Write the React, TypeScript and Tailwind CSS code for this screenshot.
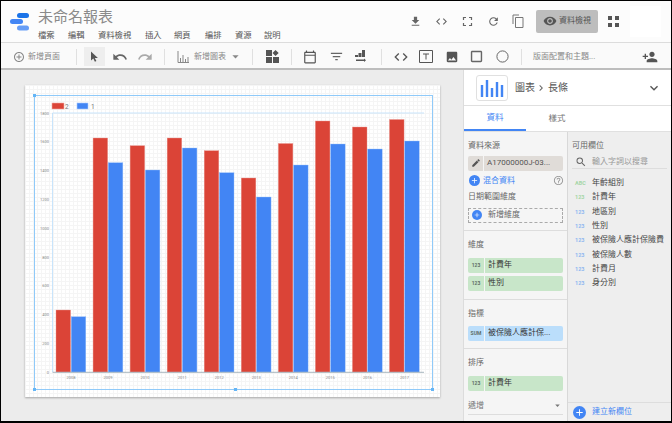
import {
  MdAddCircleOutline,
  MdArrowDropDown,
  MdChevronRight,
  MdCode,
  MdCropSquare,
  MdEdit,
  MdExpandMore,
  MdFileDownload,
  MdFilterList,
  MdHelpOutline,
  MdImage,
  MdOutlineCalendarToday,
  MdPersonAdd,
  MdRedo,
  MdRefresh,
  MdSearch,
  MdUndo,
  MdVisibility,
  MdAdd,
} from 'react-icons/md';

const FONT = '"Roboto", "Noto Sans CJK TC", sans-serif';

const MENU = [
  { label: '檔案', w: 30 },
  { label: '編輯', w: 30 },
  { label: '資料檢視', w: 47 },
  { label: '插入', w: 29 },
  { label: '網頁', w: 31 },
  { label: '編排', w: 30 },
  { label: '資源', w: 29 },
  { label: '說明', w: 30 },
];

const BARS = [
  { year: '2008', red: 310, blue: 316.7 },
  { year: '2009', red: 138, blue: 162.7 },
  { year: '2010', red: 145.7, blue: 170 },
  { year: '2011', red: 138, blue: 148 },
  { year: '2012', red: 150.7, blue: 172.7 },
  { year: '2013', red: 178, blue: 197 },
  { year: '2014', red: 143.5, blue: 165 },
  { year: '2015', red: 121, blue: 144 },
  { year: '2016', red: 127, blue: 149 },
  { year: '2017', red: 119.5, blue: 141 },
];

const TICKS = ['1800', '1600', '1400', '1200', '1000', '800', '600', '400', '200', '0'];

const FIELDS = [
  { type: 'ABC', name: '年齡組別', green: true },
  { type: '123', name: '計費年', green: true },
  { type: '123', name: '地區別' },
  { type: '123', name: '性別' },
  { type: '123', name: '被保險人應計保險費' },
  { type: '123', name: '被保險人數' },
  { type: '123', name: '計費月' },
  { type: '123', name: '身分別' },
];

function Sep() {
  return <div className="h-[16px] w-px bg-[#e0e0e0]" />;
}

function LogoIcon() {
  return (
    <svg width="20" height="20" viewBox="0 0 20 20" className="shrink-0">
      <rect x="7" y="0" width="12" height="5" rx="2.5" fill="#1a73e8" />
      <rect x="0" y="6" width="13" height="5" rx="2.5" fill="#4285f4" />
      <rect x="7" y="12.5" width="12" height="5" rx="2.5" fill="#669df6" />
    </svg>
  );
}

function Chip({ tag, label, color }: { tag: string; label: string; color: string }) {
  return (
    <div className="mx-[4px] flex h-[14.5px] gap-px overflow-hidden rounded-[2px]">
      <div className={`flex w-[16px] items-center justify-center text-[5px] font-bold text-[#5f6f66] ${color}`}>{tag}</div>
      <div className={`flex flex-1 items-center pl-[3px] text-[8px] text-[#333] ${color}`}>{label}</div>
    </div>
  );
}

function Chart() {
  const y0 = 96;
  const x0 = 35;
  return (
    <svg width="398" height="294" className="block" style={{ fontFamily: FONT }}>
      <rect x={52 - x0} y={103 - y0} width="12" height="6" fill="#db4437" stroke="#f0a8a0" strokeWidth="0.6" />
      <text x={65 - x0} y={109 - y0} fontSize="6.5" fill="#777">2</text>
      <rect x={77 - x0} y={103 - y0} width="11" height="6" fill="#4285f4" stroke="#a8c8fa" strokeWidth="0.6" />
      <text x={91 - x0} y={109 - y0} fontSize="6.5" fill="#777">1</text>
      <path d={`M${52.5 - x0} ${113 - y0}H${424 - x0}M${52.5 - x0} ${113 - y0}V${372 - y0}`} stroke="#bbdefb" strokeWidth="0.8" fill="none" />
      {TICKS.map((t, i) => (
        <text key={t} x={49 - x0} y={113 + i * 28.8 + 1.5 - y0} fontSize="4" fill="#888" textAnchor="end">{t}</text>
      ))}
      {BARS.map((b, i) => {
        const x = 56 + i * 37.05 - x0;
        return (
          <g key={b.year}>
            <rect x={x} y={b.red - y0} width="14.6" height={372 - b.red} fill="#db4437" stroke="#eb9a92" strokeWidth="0.4" />
            <rect x={x + 15.2} y={b.blue - y0} width="14.6" height={372 - b.blue} fill="#4285f4" stroke="#9cc2fa" strokeWidth="0.4" />
            <text x={x + 15} y={378.5 - y0} fontSize="4" fill="#888" textAnchor="middle">{b.year}</text>
          </g>
        );
      })}
      <path d={`M${52.5 - x0} ${372.3 - y0}H${424 - x0}`} stroke="#90a4ae" strokeWidth="0.8" />
    </svg>
  );
}

export default function App() {
  return (
    <div
      className="flex h-[423px] w-[672px] flex-col overflow-hidden border-x border-t border-b-2 border-black bg-[#ececec] text-[#555]"
      style={{ fontFamily: FONT }}
    >
      {/* top bar */}
      <header className="flex h-[42px] shrink-0 border-b border-[#dcdcdc] bg-[#fcfcfc]">
        <div className="ml-[9px] mt-[12px]">
          <LogoIcon />
        </div>
        <div className="ml-[8px] flex flex-col">
          <div className="mt-[5px] h-[22px] text-[15px] leading-[22px] text-[#8a8a8a]">未命名報表</div>
          <nav className="mt-[1px] flex text-[8.3px] leading-[12px] text-[#555]">
            {MENU.map((m) => (
              <span key={m.label} style={{ width: m.w }}>{m.label}</span>
            ))}
          </nav>
        </div>
        <div className="ml-auto flex items-center pr-[10px] pb-[1px] text-[#666]">
          <MdFileDownload className="text-[13px]" />
          <MdCode className="ml-[13px] text-[13px]" />
          <svg width="13" height="13" viewBox="0 0 13 13" className="ml-[13px]">
            <path d="M2.5 5V2.5H5M8 2.5h2.5V5M10.5 8v2.5H8M5 10.5H2.5V8" stroke="#666" strokeWidth="1.2" fill="none" />
          </svg>
          <MdRefresh className="ml-[13px] text-[13px]" />
          <svg width="12" height="14" viewBox="0 0 12 14" className="ml-[12px]">
            <path d="M1 10V1h6M3.5 3.5h7.5v10H3.5z" stroke="#777" strokeWidth="1" fill="none" />
          </svg>
          <div className="ml-[12px] flex h-[23px] w-[62px] items-center justify-center gap-[2px] rounded-[2px] bg-[#bdbdbd] text-[8px] text-[#555]">
            <MdVisibility className="text-[14px]" />
            資料檢視
          </div>
          <div className="ml-[10px] grid grid-cols-2 gap-[3px]">
            <span className="h-[4px] w-[4px] bg-[#555]" />
            <span className="h-[4px] w-[4px] bg-[#555]" />
            <span className="h-[4px] w-[4px] bg-[#555]" />
            <span className="h-[4px] w-[4px] bg-[#555]" />
          </div>
          <div className="ml-[11px] h-[31px] w-[31px] bg-white" />
        </div>
      </header>

      {/* toolbar */}
      <div className="flex h-[27px] shrink-0 items-center border-b-2 border-[#bdbdbd] bg-[#fafafa] pt-[2px] text-[#666]">
        <MdAddCircleOutline className="ml-[12px] text-[12px] text-[#888]" />
        <span className="ml-[3px] w-[48px] text-[8px] text-[#888]">新增頁面</span>
        <Sep />
        <div className="ml-[7px] flex h-[19px] w-[21px] items-center justify-center bg-[#eeeeee]">
          <svg width="9" height="11" viewBox="0 0 9 11">
            <path d="M1 0.5v9l2.3-2 1.6 3.3 1.5-.7-1.6-3.2h3.1z" fill="#555" />
          </svg>
        </div>
        <MdUndo className="ml-[7px] text-[16px] text-[#666]" />
        <MdRedo className="ml-[9px] text-[16px] text-[#aaa]" />
        <div className="ml-[11px]"><Sep /></div>
        <svg width="12" height="12" viewBox="0 0 12 12" className="ml-[12px]">
          <path d="M1 0v11.5h11M3.5 11V7M6 11V4M8.5 11V8M11 11V6" stroke="#888" strokeWidth="1" fill="none" />
        </svg>
        <span className="ml-[5px] w-[34px] text-[8px] text-[#888]">新增圖表</span>
        <MdArrowDropDown className="text-[15px] text-[#888]" />
        <div className="ml-[9px]"><Sep /></div>
        <svg width="13" height="13" viewBox="0 0 13 13" className="ml-[13px]">
          <path d="M0 0h6v6H0zM9.5 0l3.2 3-3.2 3-3-3zM0 7h6v6H0zM7 7h6v6H7z" fill="#555" />
        </svg>
        <div className="ml-[12px]"><Sep /></div>
        <MdOutlineCalendarToday className="ml-[11px] text-[14px] text-[#555]" />
        <MdFilterList className="ml-[12px] text-[15px] text-[#666]" />
        <svg width="12" height="13" viewBox="0 0 12 13" className="ml-[11px]">
          <path d="M7 0h3v7H7zM3.5 3h3v4h-3zM0 5h3v2H0zM1 9.5h8V8.5l2 1.7-2 1.7v-1H1z" fill="#555" />
        </svg>
        <div className="ml-[14px]"><Sep /></div>
        <MdCode className="ml-[11px] text-[16px] text-[#555]" />
        <svg width="14" height="13" viewBox="0 0 14 13" className="ml-[10px]">
          <path d="M.5.5h13v12H.5zM4 4h6M7 4v5.5" stroke="#555" strokeWidth="1" fill="none" />
        </svg>
        <MdImage className="ml-[12px] text-[14px] text-[#555]" />
        <MdCropSquare className="ml-[9px] text-[17px] text-[#666]" />
        <svg width="13" height="13" viewBox="0 0 13 13" className="ml-[11px]">
          <circle cx="6.5" cy="6.5" r="5.6" stroke="#666" strokeWidth="1" fill="none" />
        </svg>
        <div className="ml-[12px]"><Sep /></div>
        <span className="ml-[11px] text-[8px] text-[#888]">版面配置和主題...</span>
        <MdPersonAdd className="ml-auto mr-[13px] text-[16px] text-[#555]" />
      </div>

      {/* main */}
      <div className="flex min-h-0 flex-1">
        {/* canvas */}
        <main className="w-[462px] shrink-0 pl-[24px] pt-[15px]">
          <div className="h-[312px] w-[415px] bg-white bg-[linear-gradient(#f5f5f5_1px,transparent_1px),linear-gradient(90deg,#f5f5f5_1px,transparent_1px)] bg-[length:4px_4px] pl-[9px] pt-[10px] shadow-[0_1px_2px_rgba(0,0,0,0.3)]">
            <div className="relative h-[295px] w-[399px] border border-[#90caf9]">
              <Chart />
              {/* selection handles */}
              <span className="absolute -left-[2px] -top-[2px] h-[3px] w-[3px] bg-[#64b5f6]" />
              <span className="absolute -bottom-[2px] -left-[2px] h-[3px] w-[3px] bg-[#64b5f6]" />
              <span className="absolute -bottom-[2px] left-[199px] h-[3px] w-[3px] bg-[#64b5f6]" />
              <span className="absolute -bottom-[2px] -right-[2px] h-[3px] w-[3px] bg-[#64b5f6]" />
            </div>
          </div>
        </main>

        {/* side panel */}
        <aside className="flex w-[208px] shrink-0 flex-col border-l border-[#dcdcdc] bg-white">
          <div className="flex h-[36px] shrink-0 items-center border-b border-[#e0e0e0] pl-[12px] pr-[9px]">
            <div className="flex h-[26px] w-[32px] items-center justify-center rounded-[3px] border border-[#e0e0e0]">
              <svg width="26" height="18" viewBox="0 0 26 18">
                <path d="M3 6v12M8 1v17M13 9v9M18 3v15M23 6v12" stroke="#4285f4" strokeWidth="2.4" />
              </svg>
            </div>
            <span className="ml-[7px] text-[10px] text-[#555]">圖表</span>
            <MdChevronRight className="text-[12px] text-[#666]" />
            <span className="ml-[1px] text-[10px] text-[#555]">長條</span>
            <MdExpandMore className="ml-auto text-[16px] text-[#555]" />
          </div>
          <div className="flex h-[25px] shrink-0 text-[8.5px]">
            <div className="flex w-[62px] items-center justify-center border-b-2 border-[#4285f4] text-[#4285f4]">資料</div>
            <div className="flex w-[62px] items-center justify-center text-[#777]">樣式</div>
          </div>
          <div className="flex min-h-0 flex-1 border-t border-[#e0e0e0]">
            {/* data column */}
            <div className="w-[104px] shrink-0 border-r border-[#d8d8d8] bg-[#f5f5f5] text-[8px]">
              <div className="ml-[4px] mt-[8px] leading-[12px] text-[#666]">資料來源</div>
              <div className="mx-[4px] mt-[4px] flex h-[14.5px] gap-px">
                <div className="flex w-[15px] items-center justify-center rounded-l-[2px] bg-[#e0dcd8]">
                  <MdEdit className="text-[10px] text-[#555]" />
                </div>
                <div className="flex flex-1 items-center rounded-r-[2px] bg-[#e0dcd8] pl-[3px] text-[8px] text-[#555]">A17000000J-03...</div>
              </div>
              <div className="ml-[5px] mt-[3px] flex h-[14px] items-center pr-[2px]">
                <span className="flex h-[11px] w-[11px] items-center justify-center rounded-full bg-[#4285f4]">
                  <MdAdd className="text-[9px] text-white" />
                </span>
                <span className="ml-[3px] text-[#4285f4]">混合資料</span>
                <MdHelpOutline className="ml-auto mr-[1px] text-[11px] text-[#999]" />
              </div>
              <div className="ml-[4px] mt-[3px] leading-[12px] text-[#666]">日期範圍維度</div>
              <div className="mx-[4px] mt-[5px] flex h-[15px] items-center border border-dashed border-[#aaa] pl-[3px]">
                <span className="flex h-[10px] w-[10px] items-center justify-center rounded-full bg-[#4285f4]">
                  <MdAdd className="text-[8px] text-white" />
                </span>
                <span className="ml-[6px] text-[#666]">新增維度</span>
              </div>
              <div className="mt-[7px] border-t border-[#ddd]" />
              <div className="ml-[4px] mt-[8px] leading-[12px] text-[#666]">維度</div>
              <div className="mt-[7.5px] flex flex-col gap-[3.5px]">
                <Chip tag="123" label="計費年" color="bg-[#c8e6c9]" />
                <Chip tag="123" label="性別" color="bg-[#c8e6c9]" />
              </div>
              <div className="mt-[8px] border-t border-[#ddd]" />
              <div className="ml-[4px] mt-[8px] leading-[12px] text-[#666]">指標</div>
              <div className="mt-[6.5px]">
                <Chip tag="SUM" label="被保險人應計保..." color="bg-[#bbdefb]" />
              </div>
              <div className="mt-[7.5px] border-t border-[#ddd]" />
              <div className="ml-[4px] mt-[8px] leading-[12px] text-[#666]">排序</div>
              <div className="mt-[7px]">
                <Chip tag="123" label="計費年" color="bg-[#c8e6c9]" />
              </div>
              <div className="mx-[4px] mt-[9px] flex h-[15px] items-center justify-between border-b border-[#ddd] pb-[2px] text-[#777]">
                遞增
                <MdArrowDropDown className="text-[11px] text-[#777]" />
              </div>
            </div>

            {/* fields column */}
            <div className="flex min-w-0 flex-1 flex-col bg-[#eeeeee] text-[8px]">
              <div className="ml-[4px] mt-[8px] leading-[12px] text-[#666]">可用欄位</div>
              <div className="mx-[4px] mt-[3px] flex h-[14px] items-center border-b border-[#ddd] pl-[3px]">
                <MdSearch className="text-[12px] text-[#666]" />
                <span className="ml-[5px] text-[#999]">輸入字詞以搜尋</span>
              </div>
              <ul className="mt-[7px] flex flex-col">
                {FIELDS.map((f) => (
                  <li key={f.name} className="flex h-[14.3px] items-center whitespace-nowrap pl-[7px] text-[#444]">
                    <span className={`w-[17px] text-[5.5px] font-bold ${f.green ? 'text-[#a5d6a7]' : 'text-[#90b8f0]'}`}>{f.type}</span>
                    {f.name}
                  </li>
                ))}
              </ul>
              <div className="mt-auto flex h-[19px] items-center border-t border-[#ddd] pl-[5px]">
                <span className="flex h-[13px] w-[13px] items-center justify-center rounded-full bg-[#4285f4]">
                  <MdAdd className="text-[11px] text-white" />
                </span>
                <span className="ml-[6px] text-[#4285f4]">建立新欄位</span>
              </div>
            </div>
          </div>
        </aside>
      </div>
    </div>
  );
}
